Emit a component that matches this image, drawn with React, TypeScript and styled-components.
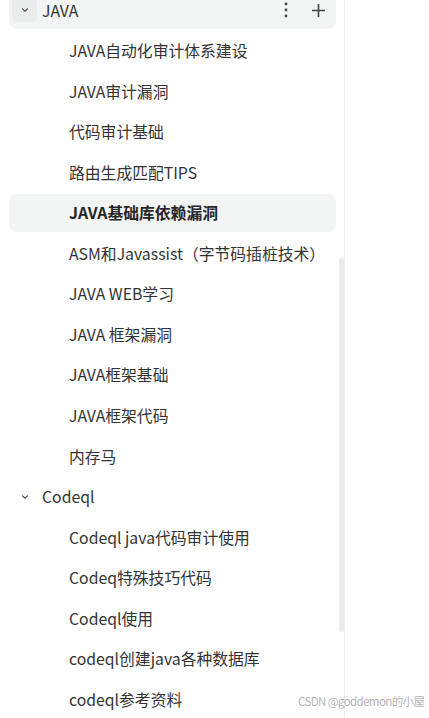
import React from "react";
import styled, { createGlobalStyle } from "styled-components";

const Global = createGlobalStyle`
  html, body { margin: 0; padding: 0; background: #ffffff; }
  body { font-family: "Noto Sans CJK SC", "Noto Sans", sans-serif; overflow: hidden; }
`;

const Page = styled.div`
  position: relative;
  width: 429px;
  height: 718px;
  overflow: hidden;
  background: #fff;
`;

const Sidebar = styled.nav`
  position: relative;
  width: 344px;
  height: 718px;
  border-right: 1px solid #ececec;
  overflow: hidden;
`;

const List = styled.ul`
  list-style: none;
  margin: -9px 0 0 0;
  padding: 0 8px 0 9px;
  display: flex;
  flex-direction: column;
  gap: 2.56px;
`;

const Row = styled.li<{ $active?: boolean; $group?: boolean }>`
  height: 38px;
  display: flex;
  align-items: center;
  box-sizing: border-box;
  padding-left: ${(p) => (p.$group ? "3px" : "60px")};
  padding-right: 10px;
  border-radius: 8px;
  background: ${(p) => (p.$active ? "#f3f4f4" : "transparent")};
  font-size: 15.8px;
  font-weight: ${(p) => (p.$active && !p.$group ? 700 : 400)};
  color: ${(p) => (p.$active && !p.$group ? "#262626" : "#333")};
  white-space: nowrap;
`;

const Toggle = styled.span<{ $hover?: boolean }>`
  width: 25px;
  height: 24px;
  display: flex;
  align-items: center;
  justify-content: center;
  border-radius: 5px;
  background: ${(p) => (p.$hover ? "#ebeded" : "transparent")};
  margin-right: 5px;
  flex: none;
`;

const Label = styled.span`
  flex: 1;
`;

const Actions = styled.span`
  display: flex;
  align-items: center;
  gap: 22px;
  color: #444;
`;

const Scrollbar = styled.div`
  position: absolute;
  left: 339px;
  top: 258px;
  width: 5px;
  height: 374px;
  background: #ebebeb;
  border-radius: 2px;
`;

const Watermark = styled.div`
  position: absolute;
  left: 298px;
  top: 693px;
  font-family: "Noto Sans CJK SC", "Noto Sans", sans-serif;
  font-size: 11.5px;
  color: rgba(110, 110, 110, 0.55);
  letter-spacing: -0.6px;
  white-space: nowrap;
  pointer-events: none;
`;

const Chevron = () => (
  <svg width="10" height="10" viewBox="0 0 10 10" fill="none">
    <path d="M2.5 3.8 L5 6.2 L7.5 3.8" stroke="#555" strokeWidth="1.2" strokeLinecap="round" strokeLinejoin="round" />
  </svg>
);

const Dots = () => (
  <svg width="6" height="16" viewBox="0 0 6 16" fill="#444">
    <circle cx="3" cy="2" r="1.4" />
    <circle cx="3" cy="8" r="1.4" />
    <circle cx="3" cy="14" r="1.4" />
  </svg>
);

const Plus = () => (
  <svg width="15" height="15" viewBox="0 0 15 15" fill="none">
    <path d="M7.5 1 V14 M1 7.5 H14" stroke="#444" strokeWidth="1.6" />
  </svg>
);

const javaItems = [
  "JAVA自动化审计体系建设",
  "JAVA审计漏洞",
  "代码审计基础",
  "路由生成匹配TIPS",
  "JAVA基础库依赖漏洞",
  "ASM和Javassist（字节码插桩技术）",
  "JAVA WEB学习",
  "JAVA 框架漏洞",
  "JAVA框架基础",
  "JAVA框架代码",
  "内存马",
];

const codeqlItems = [
  "Codeql java代码审计使用",
  "Codeq特殊技巧代码",
  "Codeql使用",
  "codeql创建java各种数据库",
  "codeql参考资料",
];

export default function App() {
  return (
    <Page>
      <Global />
      <Sidebar>
        <List>
          <Row $group $active>
            <Toggle $hover>
              <Chevron />
            </Toggle>
            <Label>JAVA</Label>
            <Actions>
              <Dots />
              <Plus />
            </Actions>
          </Row>
          {javaItems.map((t) => (
            <Row key={t} $active={t === "JAVA基础库依赖漏洞"}>
              {t}
            </Row>
          ))}
          <Row $group>
            <Toggle>
              <Chevron />
            </Toggle>
            <Label>Codeql</Label>
          </Row>
          {codeqlItems.map((t) => (
            <Row key={t}>{t}</Row>
          ))}
        </List>
        <Scrollbar />
      </Sidebar>
      <Watermark>CSDN @goddemon的小屋</Watermark>
    </Page>
  );
}
